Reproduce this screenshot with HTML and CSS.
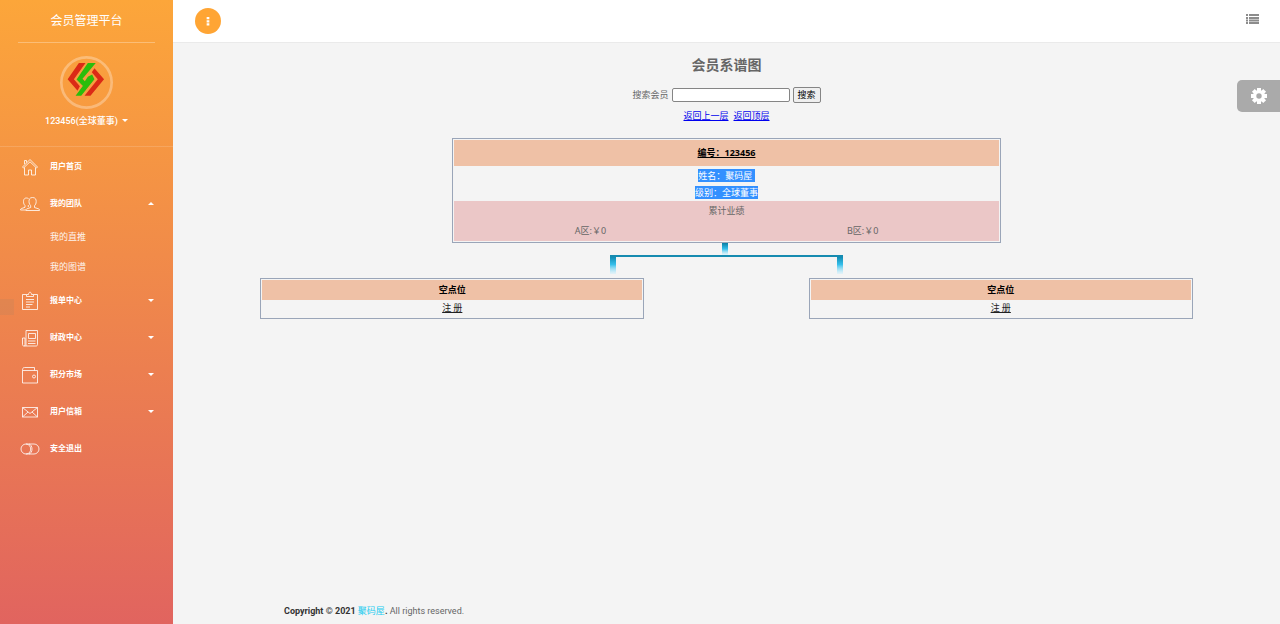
FILE: index.html
```html
<!DOCTYPE html>
<html lang="zh-CN">
<head>
<meta charset="utf-8">
<title>会员管理平台</title>
<link rel="stylesheet" href="styles.css">
</head>
<body>
<div class="layout">
  <aside class="sidebar">
    <a class="brand" href="#">会员管理平台</a>
    <div class="user">
      <svg class="avatar" viewBox="0 0 160 160" aria-hidden="true">
        <circle cx="80" cy="80" r="76" fill="none" stroke="#fff" stroke-opacity=".3" stroke-width="8"/>
        <path fill="#db2a16" d="M57 21h20L42 70l18 21-7 14-30-35zM104 37l29 33-41 50H74l40-50-18-21z"/>
        <path fill="#2bbd0b" d="M84 21h24L68 69l7 7 9-13 13-7 7 14-40 50H47l32-43-9 14-20-20z"/>
      </svg>
      <a class="user-name" href="#">123456(全球董事)<span class="caret"></span></a>
    </div>
    <nav class="menu">
      <a class="item" href="#"><svg class="icon" viewBox="0 0 20 20"><path d="M2.500 10 10 2.500l7.500 7.500-1 1L10 4.800 3.500 11zM4.500 10.500v7.500h4v-5h3v5h4v-7.500M4.500 7V3.500h2v2"/></svg><span>用户首页</span></a>
      <a class="item" href="#"><svg class="icon" viewBox="0 0 20 20"><path d="M12.500 3.500c-3 0-3.500 2-3.500 4 0 2.200 1 3.500 1.700 4.200v1.800L6.500 15c-.7.300-.7 1-.7 1.500h13.700c0-.7 0-1.300-.8-1.600L14.500 13.500v-1.800c.8-.7 1.700-2 1.700-4.200 0-2-.7-4-3.700-4zM8.500 4.500C5 3 3.500 5 3.500 7.500c0 2 .7 3.300 1.500 4v1.800L1.300 14.600c-.7.300-.8.900-.8 1.400h5M8.300 11v2"/></svg><span>我的团队</span><span class="caret caret-up"></span></a>
      <div class="submenu">
        <a class="subitem" href="#">我的直推</a>
        <a class="subitem" href="#">我的图谱</a>
      </div>
      <a class="item" href="#"><svg class="icon" viewBox="0 0 20 20"><path d="M6.500 3.500h-4v15h15v-15h-4M6.500 5.500v-2h2c0-3 3-3 3 0h2v2zM6 8.500h8M6 11h8M6 13.500h6.500M6 16h4"/></svg><span>报单中心</span><span class="caret"></span></a>
      <a class="item" href="#"><svg class="icon" viewBox="0 0 20 20"><path d="M6 2.500h11.500v14c0 1-.5 1.500-1.500 1.500H4c-1 0-1.500-.5-1.500-1.500V10h2.500v6.500c0 .8-.5 1.500-1 1.500M6 2.500V18M8.500 5.500h7v5h-7zM8 13h7.500M8 15.500h7.500"/></svg><span>财政中心</span><span class="caret"></span></a>
      <a class="item" href="#"><svg class="icon" viewBox="0 0 20 20"><path d="M2.500 5.500V18h15V5.500zM2.500 5.500c0-2 .5-3 2-3h10v3"/><circle cx="14" cy="11.500" r="1.500"/></svg><span>积分市场</span><span class="caret"></span></a>
      <a class="item" href="#"><svg class="icon" viewBox="0 0 20 20"><path d="M2.500 5.500h15v9.500h-15zM2.500 5.500l7.500 6 7.500-6M2.500 15 8 10M17.500 15 12 10"/></svg><span>用户信箱</span><span class="caret"></span></a>
      <a class="item" href="#"><svg class="icon" viewBox="0 0 20 20"><path d="M6 5h8a5 5 0 0 1 0 10H6A5 5 0 0 1 6 5c6 0 6.500 10 0 10M9 5c4 1 4 9 0 10"/></svg><span>安全退出</span></a>
    </nav>
    <div class="edge-tab"></div>
  </aside>

  <div class="page">
    <header class="topbar">
      <button class="round" type="button" aria-label="菜单"><svg viewBox="0 0 4 10"><path d="M.5 0h3v2.500h-3zM.5 3.500h3V6h-3zM.5 7h3v2.500h-3z" fill="#fff"/></svg></button>
      <button class="list-button" type="button" aria-label="列表"><svg viewBox="0 0 13 10"><path d="M0 0h2v2H0zM3 0h10v2H3zM0 3h2v2H0zM3 3h10v2H3zM0 5.500h2v2H0zM3 5.500h10v2H3zM0 8h2v2H0zM3 8h10v2H3z" fill="#8c8c8c"/></svg></button>
    </header>
    <main class="content">
      <h1 class="title">会员系谱图</h1>
      <form class="search">
        <label for="member">搜索会员</label>
        <input id="member" type="text">
        <button type="button">搜索</button>
      </form>
      <p class="links"><a href="#">返回上一层</a><a href="#">返回顶层</a></p>

      <section class="member">
        <h2 class="member-id"><a href="#">编号：123456</a></h2>
        <div class="member-info">
          <p><span class="selected">姓名：聚码屋&nbsp;</span></p>
          <p><span class="selected">级别：全球董事</span></p>
        </div>
        <div class="totals">
          <p class="totals-title">累计业绩</p>
          <p>A区:￥0</p>
          <p>B区:￥0</p>
        </div>
      </section>
      <svg class="connector" viewBox="0 0 233 31" aria-hidden="true">
        <defs>
          <linearGradient id="drop" x1="0" y1="0" x2="0" y2="1">
            <stop offset="0" stop-color="#087ea4"/>
            <stop offset=".5" stop-color="#35bfeb"/>
            <stop offset="1" stop-color="#bdeeff" stop-opacity=".3"/>
          </linearGradient>
        </defs>
        <path d="M112 0h6v12h-6z" fill="url(#drop)"/>
        <path d="M0 12h6v19H0z" fill="url(#drop)"/>
        <path d="M227 12h6v19h-6z" fill="url(#drop)"/>
        <path d="M0 12h233v2H0z" fill="#168bb0"/>
      </svg>
      <div class="slots">
        <section class="slot"><h3>空点位</h3><a href="#">注 册</a></section>
        <section class="slot"><h3>空点位</h3><a href="#">注 册</a></section>
      </div>
    </main>
    <footer class="footer"><b>Copyright © 2021 <a href="#">聚码屋</a>.</b> All rights reserved.</footer>
  </div>
</div>
<button class="settings" type="button" aria-label="设置"><svg viewBox="-8 -8 16 16"><g fill="#fff"><circle r="6"/><path d="M-2-8h4v16h-4z"/><path d="M-2-8h4v16h-4z" transform="rotate(45)"/><path d="M-2-8h4v16h-4z" transform="rotate(90)"/><path d="M-2-8h4v16h-4z" transform="rotate(135)"/></g><circle r="2.700" fill="#aaa"/></svg></button>
</body>
</html>
```
FILE: styles.css
```css
* {
  box-sizing: border-box;
}

body {
  margin: 0;
  font: 9px/14px Roboto, "Noto Sans CJK SC", sans-serif;
  color: #666;
  background: #f4f4f4;
}

h1, h2, h3, p {
  margin: 0;
}

button {
  border: 0;
  padding: 0;
}

.layout {
  display: flex;
  min-height: 100vh;
}

.sidebar {
  position: relative;
  flex: 0 0 173px;
  color: #fff;
  background: linear-gradient(#fca63a, #e1645f);
}

.sidebar a {
  color: #fff;
  text-decoration: none;
}

.brand {
  display: block;
  margin: 0 18px;
  height: 43px;
  border-bottom: 1px solid rgba(255, 255, 255, .3);
  font-size: 12px;
  line-height: 43px;
  text-align: center;
}

.user {
  display: flex;
  flex-direction: column;
  align-items: center;
  height: 104px;
  padding-top: 13px;
  border-bottom: 1px solid rgba(255, 255, 255, .15);
}

.avatar {
  width: 53px;
  height: 53px;
}

.user-name {
  margin-top: 5px;
  font-weight: 500;
}

.caret {
  display: inline-block;
  margin-left: 4px;
  border: 3px solid transparent;
  border-top-color: currentColor;
  border-bottom: 0;
  vertical-align: 2px;
}

.caret-up {
  border-top: 0;
  border-bottom: 3px solid;
  border-left-color: transparent;
  border-right-color: transparent;
}

.menu {
  padding-top: 1px;
}

.item {
  display: flex;
  align-items: center;
  gap: 10px;
  height: 37px;
  padding: 0 19px 0 20px;
  font-size: 8px;
  font-weight: 700;
}

.item .caret {
  margin-left: auto;
}

.icon {
  width: 20px;
  height: 20px;
  overflow: visible;
  fill: none;
  stroke: #fff;
  stroke-opacity: .8;
}

.subitem {
  display: block;
  padding-left: 50px;
  line-height: 30px;
  opacity: .9;
}

.edge-tab {
  position: absolute;
  top: 299px;
  left: 0;
  width: 14px;
  height: 16px;
  background: rgba(150, 130, 110, .15);
}

.page {
  display: flex;
  flex: 1;
  flex-direction: column;
}

.topbar {
  display: flex;
  align-items: center;
  justify-content: space-between;
  height: 43px;
  padding: 0 21px 0 22px;
  border-bottom: 1px solid #eaeaea;
  background: #fff;
}

.round {
  display: grid;
  place-items: center;
  width: 26px;
  height: 26px;
  border-radius: 50%;
  background: #ffa534;
}

.round svg {
  width: 4px;
  height: 9px;
}

.list-button {
  padding-bottom: 4px;
  background: none;
}

.list-button svg {
  display: block;
  width: 13px;
  height: 10px;
}

.content {
  display: flex;
  flex: 1;
  flex-direction: column;
  align-items: center;
  padding: 12px 5px;
}

.title {
  font-size: 14px;
  line-height: 20px;
}

.search {
  display: flex;
  align-items: center;
  gap: 3px;
  margin-top: 12px;
}

.search input {
  width: 118px;
  height: 14px;
  border: 1px solid #858585;
  border-radius: 2px;
  background: #fff;
  font: inherit;
}

.search button {
  width: 28px;
  height: 16px;
  border: 1px solid #858585;
  border-radius: 2px;
  background: #efefef;
  color: #000;
  font: inherit;
}

.links {
  display: flex;
  gap: 5px;
  margin-top: 6px;
}

.links a {
  color: #00e;
}

.member {
  width: 50%;
  margin-top: 15px;
  padding: 1px;
  border: 1px solid #9aa5b8;
  font-family: "Noto Sans", "Noto Sans CJK SC", sans-serif;
  text-align: center;
}

.member-id {
  background: #efc1a6;
  font-size: 9px;
  line-height: 26px;
}

.member-id a {
  color: #000;
}

.member-info {
  padding-top: 1px;
  line-height: 17px;
}

.selected {
  display: inline-block;
  background: #3390ff;
  color: #fff;
  line-height: 13px;
}

.totals {
  display: grid;
  grid-template-columns: 1fr 1fr;
  background: #ebc7c7;
  line-height: 20px;
}

.totals-title {
  grid-column: 1 / 3;
}

.connector {
  width: 233px;
  height: 31px;
}

.slots {
  display: grid;
  grid-template-columns: 1fr 1fr;
  justify-items: center;
  width: 100%;
  margin-top: 4px;
}

.slot {
  width: 70%;
  padding: 1px;
  border: 1px solid #9aa5b8;
  line-height: 17px;
  text-align: center;
}

.slot h3 {
  background: #efc1a6;
  color: #000;
  font-size: 9px;
  line-height: 20px;
}

.slot a {
  color: #222;
}

.footer {
  padding: 0 0 5px 111px;
  line-height: 15px;
}

.footer b {
  color: #333;
}

.footer a {
  color: #23ccef;
  font-weight: 400;
  text-decoration: none;
}

.settings {
  position: fixed;
  top: 80px;
  right: 0;
  display: grid;
  place-items: center;
  width: 43px;
  height: 32px;
  border-radius: 5px 0 0 5px;
  background: #aaa;
}

.settings svg {
  width: 16px;
  height: 16px;
}
```
